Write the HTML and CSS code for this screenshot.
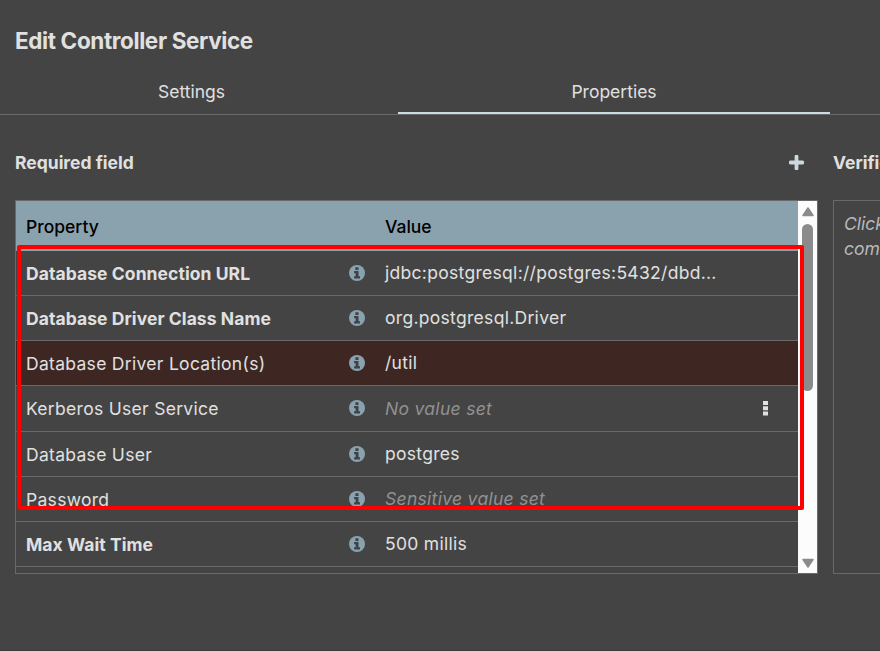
FILE: index.html
```html
<!DOCTYPE html>
<html lang="en">
<head>
<meta charset="utf-8">
<title>Edit Controller Service</title>
<link rel="stylesheet" href="styles.css">
</head>
<body>
<svg class="defs" width="0" height="0" aria-hidden="true">
  <symbol id="info" viewBox="0 0 16 16">
    <circle cx="8" cy="8" r="8" fill="#8aa2ae"/>
    <path d="M6.400 2.200h3.100v2.700H6.400zM5.100 6.100h4.400v5.200h1.500v2.300H5.100v-2.300h1.500v-3H5.100z" fill="#3c4347"/>
  </symbol>
</svg>
<main class="dialog">
  <h1 class="title">Edit Controller Service</h1>
  <nav class="tabs">
    <a class="tab">Settings</a>
    <a class="tab tab-active">Properties</a>
  </nav>
  <div class="content">
    <section class="properties">
      <header class="section-head">
        <h2>Required field</h2>
        <svg class="add" viewBox="0 0 15 15"><path d="M7.500 1.500v12M1.500 7.500h12" stroke="#cbd8df" stroke-width="3.800" stroke-linecap="round"/></svg>
      </header>
      <div class="table">
        <div class="rows">
          <div class="row head"><span class="name">Property</span><span class="value">Value</span></div>
          <div class="row"><span class="name required">Database Connection URL</span><svg class="info"><use href="#info"/></svg><span class="value">jdbc:postgresql://postgres:5432/dbd...</span></div>
          <div class="row"><span class="name required">Database Driver Class Name</span><svg class="info"><use href="#info"/></svg><span class="value">org.postgresql.Driver</span></div>
          <div class="row modified"><span class="name">Database Driver Location(s)</span><svg class="info"><use href="#info"/></svg><span class="value">/util</span></div>
          <div class="row tall"><span class="name">Kerberos User Service</span><svg class="info"><use href="#info"/></svg><span class="value unset">No value set</span><svg class="more" viewBox="0 0 5 15"><path d="M0 0h5v4H0zM0 5.300h5v4H0zM0 10.600h5v4H0z" fill="#e0e0e0"/></svg></div>
          <div class="row"><span class="name">Database User</span><svg class="info"><use href="#info"/></svg><span class="value">postgres</span></div>
          <div class="row"><span class="name">Password</span><svg class="info"><use href="#info"/></svg><span class="value unset sensitive">Sensitive value set</span></div>
          <div class="row"><span class="name required">Max Wait Time</span><svg class="info"><use href="#info"/></svg><span class="value">500 millis</span></div>
        </div>
        <div class="scrollbar">
          <svg class="arrow" viewBox="0 0 12 10"><path d="M6 1 11 8.500H1z" fill="#8b8b8b" stroke="#8b8b8b" stroke-width="1.500" stroke-linejoin="round"/></svg>
          <div class="thumb"></div>
          <svg class="arrow" viewBox="0 0 12 10"><path d="M1 1.500h10L6 9z" fill="#8b8b8b" stroke="#8b8b8b" stroke-width="1.500" stroke-linejoin="round"/></svg>
        </div>
        <div class="highlight"></div>
      </div>
    </section>
    <aside class="verification">
      <header class="section-head"><h2>Verific</h2></header>
      <div class="hint">Click<br>com</div>
    </aside>
  </div>
</main>
</body>
</html>
```

FILE: styles.css
```css
* { box-sizing: border-box; }
body {
  margin: 0;
  width: 880px;
  height: 651px;
  overflow: hidden;
  background: #444;
  color: #e0e0e0;
  font: 400 17.5px/24px Inter, sans-serif;
}
.defs { position: absolute; }
.dialog { display: flex; flex-direction: column; height: 651px; overflow: hidden; border-bottom: 1px solid #3b3b3b; }
h1, h2 { margin: 0; font-weight: 700; }
.title { padding: 25px 15px 0; height: 69px; font-size: 22.5px; line-height: 32px; letter-spacing: -0.38px; }
.tabs { display: flex; gap: 15px; height: 46px; border-bottom: 1px solid #696969; }
.tab { width: 383px; padding-top: 11px; text-align: center; }
.tab-active { width: 432px; border-bottom: 2px solid #cbdbe2; }
.content { display: flex; gap: 15px; padding: 35px 0 0 15px; }
.properties { flex: none; width: 803px; }
.section-head { display: flex; justify-content: space-between; height: 50px; padding-right: 14.5px; }
h2 { font-size: 17.5px; line-height: 26px; letter-spacing: 0; }
.add { width: 15px; height: 15px; margin-top: 4.5px; }
.table { position: relative; display: flex; height: 374px; border: 1px solid #696969; }
.rows { flex: 1; overflow: hidden; letter-spacing: 0.3px; }
.row {
  display: grid;
  grid-template-columns: 323px 36px 360px 1fr;
  height: 45px;
  padding-left: 10px;
  border-bottom: 1px solid #696969;
}
.row.tall { height: 46px; }
.row.head { height: 50px; border: 0; background: #8aa2ae; color: #000; font-weight: 500; letter-spacing: 0; }
.head .name, .head .value { padding-top: 14px; }
.head .value { grid-column: 3; }
.name { padding-top: 11px; white-space: nowrap; }
.value { padding-top: 10px; white-space: nowrap; }
.required { font-weight: 700; letter-spacing: 0.07px; }
.info { width: 16px; height: 16px; margin-top: 14px; }
.modified { background: #3e2723; }
.unset { padding-top: 11px; color: #919191; font-style: italic; }
.unset.sensitive { padding-top: 10px; }
.more { width: 5px; height: 15px; margin: 15px 0 0 18px; }
.scrollbar { display: flex; flex-direction: column; align-items: center; width: 19px; background: #fcfcfc; padding: 6px 0 5px; }
.arrow { width: 12px; height: 10px; }
.thumb { width: 11px; height: 167px; margin: 7px 0 auto; border-radius: 6px; background: #8b8b8b; }
.highlight { position: absolute; left: 1px; top: 44px; width: 787px; height: 265px; border: 4px solid #f00; border-radius: 2px; }
.verification { flex: none; width: 270px; }
.hint { height: 374px; padding: 10px; border: 1px solid #696969; color: #b9b9b9; font-style: italic; line-height: 25px; }
```
